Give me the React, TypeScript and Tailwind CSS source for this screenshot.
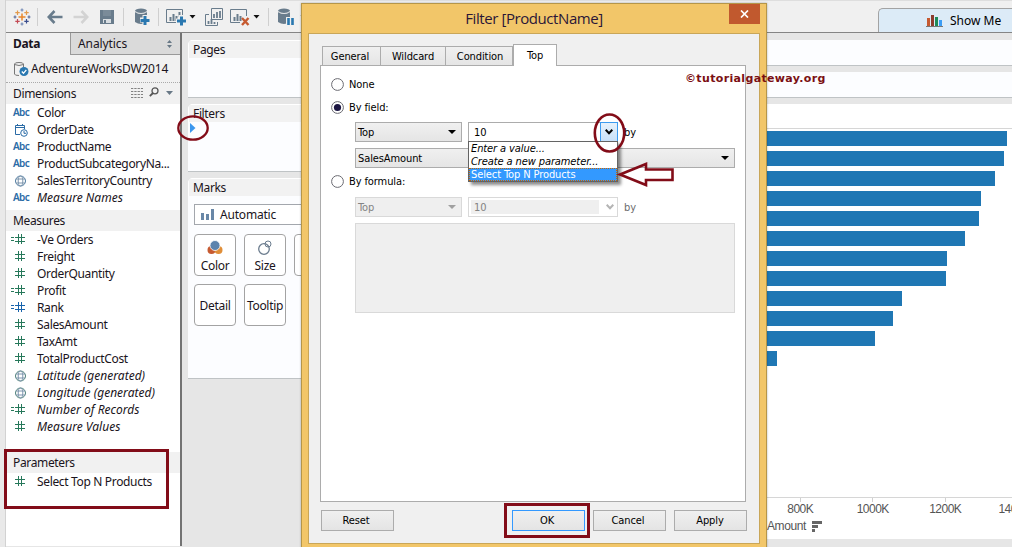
import type { ReactNode } from 'react';

type FieldKind = 'abc' | 'date' | 'globe' | 'globeGreen' | 'num' | 'calc' | 'calcBlue';
type Field = { kind: FieldKind; name: string; italic?: boolean };

const dimensions: Field[] = [
  { kind: 'abc', name: 'Color' },
  { kind: 'date', name: 'OrderDate' },
  { kind: 'abc', name: 'ProductName' },
  { kind: 'abc', name: 'ProductSubcategoryNa...' },
  { kind: 'globe', name: 'SalesTerritoryCountry' },
  { kind: 'abc', name: 'Measure Names', italic: true },
];

const measures: Field[] = [
  { kind: 'calc', name: '-Ve Orders' },
  { kind: 'num', name: 'Freight' },
  { kind: 'num', name: 'OrderQuantity' },
  { kind: 'calc', name: 'Profit' },
  { kind: 'calcBlue', name: 'Rank' },
  { kind: 'num', name: 'SalesAmount' },
  { kind: 'num', name: 'TaxAmt' },
  { kind: 'num', name: 'TotalProductCost' },
  { kind: 'globeGreen', name: 'Latitude (generated)', italic: true },
  { kind: 'globeGreen', name: 'Longitude (generated)', italic: true },
  { kind: 'calc', name: 'Number of Records', italic: true },
  { kind: 'num', name: 'Measure Values', italic: true },
];

const bars = [240, 237, 228, 214, 212, 198, 180, 179, 135, 126, 108, 10];

function FieldIcon({ kind }: { kind: FieldKind }) {
  if (kind === 'abc')
    return <span className="w-[31px] pl-[7px] text-[10px] font-semibold not-italic tracking-[-0.6px] text-[#2a6ba6]">Abc</span>;
  if (kind === 'date')
    return (
      <svg className="ml-[8px] mr-[9px] h-[14px] w-[14px] shrink-0" viewBox="0 0 14 14" fill="none" stroke="#2a6ba6">
        <path d="M6 11.5H1.500V2.500H10.500V6M1.500 4.500H10.500M3.500 1V3M8.500 1V3" />
        <circle cx="10" cy="10" r="3.300" />
        <path d="M10 8V10.300H12" />
      </svg>
    );
  if (kind === 'globe' || kind === 'globeGreen')
    return (
      <svg className="ml-[8px] mr-[9px] h-[14px] w-[14px] shrink-0" viewBox="0 0 14 14" fill="none" stroke={kind === 'globe' ? '#4f7ba0' : '#4c7f79'}>
        <circle cx="6.500" cy="7" r="5" />
        <ellipse cx="6.500" cy="7" rx="2.300" ry="5" stroke="#7d95ad" />
        <path d="M2 5H11M2 9H11" stroke="#7d95ad" />
      </svg>
    );
  const color = kind === 'calcBlue' ? '#1763ac' : '#26785a';
  return (
    <svg className="mb-px ml-[5px] mr-[11px] h-[12px] w-[15px] shrink-0" viewBox="0 0 15 12" stroke={color}>
      <path d="M4 4.500H14M4 8.500H14" />
      <path d="M7.500 1V11M10.500 1V11" />
      {kind !== 'num' && <path d="M0 4.500H3M0 7.500H3" />}
    </svg>
  );
}

function FieldRow({ field }: { field: Field }) {
  return (
    <div className={`flex h-[17px] items-center whitespace-nowrap text-[12px] leading-[17px] text-[#1a1420] ${field.italic ? 'italic tracking-[0.02px]' : 'tracking-[-0.34px]'}`}>
      <FieldIcon kind={field.kind} />
      <span>{field.name}</span>
    </div>
  );
}

function PaneHeader({ title, children }: { title: string; children?: ReactNode }) {
  return (
    <div className="flex h-[21px] shrink-0 items-center bg-[#f1f1f1] pl-[7px] text-[12px] tracking-[-0.35px]">
      {title}
      {children}
    </div>
  );
}

function Sep() {
  return <div className="h-[18px] w-px shrink-0 bg-[#cfcfcf]" />;
}

function Caret({ className }: { className: string }) {
  return (
    <svg className={`h-[4px] w-[7px] shrink-0 ${className}`} viewBox="0 0 7 4">
      <path d="M0.500 0H6.500L3.500 3.500Z" fill="#111" />
    </svg>
  );
}

function Database({ badge }: { badge: 'plus' | 'pause' }) {
  return (
    <>
      <ellipse cx="6" cy="3" rx="6" ry="2.600" fill="#697c8c" />
      <path d="M0 4Q6 8 12 4V14Q6 18 0 14Z" fill="#697c8c" />
      <path d="M0 3.500Q6 7.500 12 3.500" stroke="#f0f0f0" fill="none" strokeWidth=".8" />
      {badge === 'plus' ? (
        <>
          <path d="M10 7V17M5 12H15" stroke="#f0f0f0" strokeWidth="5" />
          <path d="M10 8V17M5.500 12.500H14.500" stroke="#2a78b0" strokeWidth="3" />
        </>
      ) : (
        <>
          <path d="M8 9H17V19H8Z" fill="#f0f0f0" />
          <path d="M10.500 10V17M14.500 10V17" stroke="#2a78b0" strokeWidth="2.600" />
        </>
      )}
    </>
  );
}

function Toolbar() {
  return (
    <div className="flex h-[32px] shrink-0 items-center border-t border-[#dedede] pl-[7px]">
      <svg className="h-[18px] w-[18px] shrink-0" viewBox="0 0 18 18" strokeWidth="1.200" fill="none">
        <path d="M9 5.500V12.500M5.500 9H12.500" stroke="#e8862b" strokeWidth="1.500" />
        <path d="M4.500 2.500V7M2.300 4.700H6.700" stroke="#e39a4b" />
        <path d="M13.500 2.500V7M11.300 4.700H15.700" stroke="#e39a4b" />
        <path d="M4.500 11V15.500M2.300 13.300H6.700" stroke="#c34a55" />
        <path d="M13.500 11V15.500M11.300 13.300H15.700" stroke="#394c8c" />
        <path d="M9 .5V3.500M7.500 2H10.500M9 14.500V17.500M7.500 16H10.500" stroke="#7188b5" />
        <path d="M2 7.500V10.500M.5 9H3.500M16 7.500V10.500M14.500 9H17.500" stroke="#5c6d9b" />
      </svg>
      <div className="ml-[6px]"><Sep /></div>
      <svg className="ml-[9px] h-[14px] w-[16px] shrink-0" viewBox="0 0 16 14" fill="none" stroke="#697c8c" strokeWidth="2.600">
        <path d="M7.500 1L1.800 7L7.500 13M2 7H15.500" />
      </svg>
      <svg className="ml-[10px] h-[14px] w-[16px] shrink-0" viewBox="0 0 16 14" fill="none" stroke="#d3d3d3" strokeWidth="2.600">
        <path d="M8.500 1L14.200 7L8.500 13M14 7H.5" />
      </svg>
      <svg className="ml-[11px] h-[14px] w-[14px] shrink-0" viewBox="0 0 14 14">
        <path d="M0 0H14V14H0Z" fill="#697c8c" />
        <path d="M3 0H11V6H3Z" fill="#7a8b99" />
        <path d="M3 9H11V13H3Z" fill="#d9dee2" />
        <path d="M4 10H6V13H4Z" fill="#697c8c" />
      </svg>
      <div className="ml-[9px]"><Sep /></div>
      <svg className="ml-[11px] h-[18px] w-[15px] shrink-0" viewBox="0 0 15 18"><Database badge="plus" /></svg>
      <div className="ml-[8px]"><Sep /></div>
      <svg className="ml-[7px] h-[18px] w-[20px] shrink-0" viewBox="0 0 20 18" fill="none">
        <path d="M12 14.500H.5V1.500H16.500V8" stroke="#697c8c" />
        <path d="M4.500 13V9M7.500 13V6M10.500 13V8M13.500 9V4" stroke="#697c8c" strokeWidth="2" />
        <path d="M15 7V18M10 13H20" stroke="#f0f0f0" strokeWidth="5" />
        <path d="M15.500 8.500V17.500M11 13H20" stroke="#2a78b0" strokeWidth="3" />
      </svg>
      <Caret className="ml-[3px]" />
      <svg className="ml-[9px] h-[18px] w-[19px] shrink-0" viewBox="0 0 19 18" fill="none" stroke="#697c8c">
        <path d="M6.500 .5H17.500V11.500H6.500ZM4 6.500H.5V17.500H12.500V14" />
        <path d="M9 10V6M12 10V4M15 10V3M3.500 16V13M6.500 16V11M9.500 16V14" strokeWidth="1.800" />
      </svg>
      <svg className="ml-[6px] h-[18px] w-[20px] shrink-0" viewBox="0 0 20 18" fill="none">
        <path d="M10 14.500H.5V1.500H16.500V8" stroke="#697c8c" />
        <path d="M4.500 13V9M7.500 13V6M10.500 13V8" stroke="#697c8c" strokeWidth="2" />
        <path d="M12 10L18.500 17M18.500 10L12 17" stroke="#c65a31" strokeWidth="2.400" />
      </svg>
      <Caret className="ml-[3px]" />
      <div className="ml-[8px]"><Sep /></div>
      <svg className="ml-[9px] h-[18px] w-[17px] shrink-0" viewBox="0 0 17 18"><Database badge="pause" /></svg>
      <Caret className="ml-[5px]" />
      <div className="ml-auto flex h-[24px] w-[134px] shrink-0 items-center self-end rounded-tl-[5px] border-l border-t border-[#a3a3a3] bg-[#dcebf7] pl-[47px] text-[12px]">
        <svg className="mr-[7px] h-[12px] w-[17px]" viewBox="0 0 17 12">
          <path d="M1 3H4V11H1Z" fill="#c65a31" />
          <path d="M5 0H8V11H5Z" fill="#8c3c2e" />
          <path d="M9 2H12V11H9Z" fill="#1e8a5a" />
          <path d="M13 5H16V11H13Z" fill="#3b9df5" />
          <path d="M0 11.500H17" stroke="#777" />
        </svg>
        Show Me
      </div>
    </div>
  );
}

function DataPane() {
  return (
    <div className="flex h-[513px] w-[176px] shrink-0 flex-col border-r-2 border-[#737373] bg-white text-[#1a1420]">
      <div className="flex h-[22px] shrink-0 bg-[#f1f1f1]">
        <div className="w-[64px] pl-[7px] text-[12px] font-bold leading-[22px] tracking-[-0.3px]">Data</div>
        <div className="flex flex-1 items-center border-b border-l border-[#999] bg-[#dadada] pl-[7px] text-[12px] tracking-[-0.1px]">
          Analytics
          <svg className="ml-auto mr-[7px] h-[8px] w-[7px]" viewBox="0 0 7 8" fill="#687886">
            <path d="M1 3H6L3.500 0ZM1 5H6L3.500 8Z" />
          </svg>
        </div>
      </div>
      <div className="flex h-[28px] shrink-0 items-center border-b border-dotted border-[#aaa] bg-[#f1f1f1] pl-[7px] text-[12px] tracking-[-0.5px]">
        <svg className="mr-[2px] h-[16px] w-[16px] shrink-0" viewBox="0 0 16 16" fill="none">
          <path d="M6 14.500Q1.500 14.500 1.500 13V3Q1.500 1.500 6 1.500T10.500 3V6M1.500 3.500Q6 5.500 10.500 3.500" stroke="#777" />
          <circle cx="11" cy="10.500" r="4.500" fill="#2a78b0" />
          <path d="M8.800 10.500L10.500 12.300L13.300 8.800" stroke="#fff" strokeWidth="1.300" />
        </svg>
        <span className="tracking-[-0.2px]">AdventureWorksDW2014</span>
      </div>
      <PaneHeader title="Dimensions">
        <svg className="mb-[2px] ml-auto mr-[6px] h-[10px] w-[12px]" viewBox="0 0 12 10">
          <path d="M0 .5H12M0 3.500H12M0 6.500H12M0 9.500H12" stroke="#828282" strokeDasharray="2.300 1" />
        </svg>
        <svg className="mb-[3px] mr-[7px] h-[10px] w-[10px]" viewBox="0 0 10 10" fill="none" stroke="#555">
          <circle cx="6" cy="3.800" r="3" strokeWidth="1.300" />
          <path d="M4 6L.8 9.200" strokeWidth="1.800" />
        </svg>
        <svg className="mb-px mr-[7px] h-[4px] w-[7px]" viewBox="0 0 7 4"><path d="M0 0H7L3.500 4Z" fill="#687886" /></svg>
      </PaneHeader>
      <div className="h-[106px] shrink-0">
        {dimensions.map((f) => <FieldRow key={f.name} field={f} />)}
      </div>
      <PaneHeader title="Measures" />
      <div className="h-[221px] shrink-0">
        {measures.map((f) => <FieldRow key={f.name} field={f} />)}
      </div>
      <PaneHeader title="Parameters" />
      <FieldRow field={{ kind: 'num', name: 'Select Top N Products' }} />
    </div>
  );
}

function Card({ title, className, children }: { title: string; className: string; children?: ReactNode }) {
  return (
    <div className={`shrink-0 overflow-hidden rounded-tl-[5px] border-b border-[#bfc3c5] bg-[#fcfdff] ${className}`}>
      <div className="h-[18px] border-l border-t border-white bg-[#f2f2f2] pl-[4px] text-[12px] leading-[18px] tracking-[-0.35px]">{title}</div>
      {children}
    </div>
  );
}

function MarkButton({ label, children }: { label: string; children?: ReactNode }) {
  return (
    <div className="flex h-[42px] w-[42px] shrink-0 flex-col items-center justify-center rounded-[4px] border border-[#a3a3a3] bg-white text-[12px] leading-[17px] tracking-[-0.3px]">
      {children}
      {label}
    </div>
  );
}

function Cards() {
  return (
    <div className="flex w-[578px] shrink-0 flex-col gap-[6px] pl-[6px] pt-[7px] text-[#1a1420]">
      <Card title="Pages" className="h-[58px]" />
      <Card title="Filters" className="h-[68px]">
        <svg className="ml-[2px] mt-px h-[10px] w-[6px]" viewBox="0 0 6 10"><path d="M0 0L5.500 5L0 10Z" fill="#3b97ee" /></svg>
      </Card>
      <Card title="Marks" className="h-[201px]">
        <div className="ml-[6px] mt-[8px] flex h-[21px] items-center border border-[#a3a7ad] bg-white pl-[6px] text-[12px] tracking-[-0.2px]">
          <svg className="mr-[5px] h-[12px] w-[14px]" viewBox="0 0 14 12" fill="#6987a7">
            <path d="M0 4H3V11H0ZM5 5H8V11H5ZM10 0H13V11H10Z" />
          </svg>
          Automatic
        </div>
        <div className="ml-[6px] mt-[9px] grid grid-cols-[42px_42px_42px] gap-[8px]">
          <MarkButton label="Color">
            <svg className="mb-px mt-[3px] h-[16px] w-[16px]" viewBox="0 0 16 16">
              <circle cx="4.500" cy="10" r="4" fill="#c65a31" />
              <circle cx="11.500" cy="10" r="4" fill="#e08e38" />
              <circle cx="8" cy="5.500" r="5" fill="#5b83ad" stroke="#fff" strokeWidth=".8" />
            </svg>
          </MarkButton>
          <MarkButton label="Size">
            <svg className="mb-px mt-[3px] h-[16px] w-[16px]" viewBox="0 0 16 16" fill="none" stroke="#6b7c8e">
              <circle cx="7" cy="9" r="5.300" strokeWidth="1.300" />
              <circle cx="11" cy="4" r="3" />
            </svg>
          </MarkButton>
          <MarkButton label="" />
          <MarkButton label="Detail" />
          <MarkButton label="Tooltip" />
        </div>
      </Card>
    </div>
  );
}

function Chart() {
  return (
    <div className="flex flex-1 flex-col gap-[6px] pt-[7px]">
      <div className="h-[26px] shrink-0 border-b border-[#bfc3c5] bg-[#fcfdff]" />
      <div className="h-[26px] shrink-0 border-b border-[#bfc3c5] bg-[#fcfdff]" />
      <div className="flex h-[435px] shrink-0 flex-col overflow-hidden bg-white">
        <div className="h-[25px] shrink-0 border-b border-[#d6d6d6]" />
        <div className="flex h-[369px] shrink-0 flex-col gap-[5px] border-b border-[#d6d6d6] pt-[2px]">
          {bars.map((w) => <div key={w} className="h-[15px] shrink-0 bg-[#1f77b4]" style={{ width: w }} />)}
        </div>
        <div className="-ml-[3px] flex h-[19px] shrink-0 font-['Liberation_Sans',Arial,sans-serif] text-[12px] leading-[15px] tracking-[-0.5px] text-[#555]">
          {['800K', '1000K', '1200K', '1400K'].map((t) => (
            <div key={t} className="flex w-[72.500px] shrink-0 flex-col items-center last:w-[66px]">
              <div className="h-[4px] w-px shrink-0 bg-[#d0d0d0]" />
              <span>{t}</span>
            </div>
          ))}
        </div>
        <div className="flex h-[18px] items-center font-['Liberation_Sans',Arial,sans-serif] text-[12px] tracking-[-0.4px] text-[#555]">
          Amount
          <svg className="ml-[6px] h-[11px] w-[10px]" viewBox="0 0 10 11" fill="#666"><path d="M0 0H10V3H0ZM0 4H6V7H0ZM0 8H3V11H0Z" /></svg>
        </div>
      </div>
    </div>
  );
}

function Radio({ label, checked }: { label: string; checked?: boolean }) {
  return (
    <div className="flex h-[14px] items-center gap-[5px]">
      <svg className="mb-px h-[13px] w-[13px]" viewBox="0 0 13 13">
        <circle cx="6.500" cy="6.500" r="5.900" fill="#fff" stroke="#6b6b72" />
        {checked && <circle cx="6.500" cy="6.500" r="3.600" fill="#1b1541" />}
      </svg>
      <span className="pt-px">{label}</span>
    </div>
  );
}

function Combo({ label, className, disabled }: { label: string; className: string; disabled?: boolean }) {
  return (
    <div className={`flex h-[20px] items-center border pl-[2px] pr-[5px] ${disabled ? 'border-[#d9d9d9] bg-[#efefef] text-[#838383]' : 'border-[#acacac] bg-gradient-to-b from-[#f0f0f0] to-[#e5e5e5]'} ${className}`}>
      <span className="pt-[2px]">{label}</span>
      <svg className="ml-auto h-[4px] w-[8px]" viewBox="0 0 8 4"><path d="M0 0H8L4 4Z" fill={disabled ? '#a0a0a0' : '#000'} /></svg>
    </div>
  );
}

function Chevron({ color }: { color: string }) {
  return (
    <svg className="h-[6px] w-[8px]" viewBox="0 0 8 6" fill="none" stroke={color} strokeWidth="2">
      <path d="M.7 .8L4 4.300L7.300 .8" />
    </svg>
  );
}

function PushButton({ label, className }: { label: string; className: string }) {
  return (
    <div className={`flex h-[21px] w-[73px] shrink-0 items-center justify-center border bg-gradient-to-b from-[#f0f0f0] to-[#e4e4e4] pt-[2px] ${className}`}>{label}</div>
  );
}

function FilterDialog() {
  return (
    <div className="absolute left-[301px] top-[3px] flex h-[550px] w-[466px] flex-col border border-[#b5964a] bg-[#f2c669] px-[6px] text-black shadow-[0_0_2px_rgba(0,0,0,0.3)]">
      <div className="flex h-[29px] shrink-0">
        <div className="flex-1 pl-[31px] text-center font-['Open_Sans','Noto_Sans',sans-serif] text-[15px] leading-[29px] tracking-[-0.42px] text-[#2b1638]">Filter [ProductName]</div>
        <div className="flex h-[20px] w-[31px] items-center justify-center bg-[#c1592e]">
          <svg className="h-[8px] w-[9px]" viewBox="0 0 9 8" stroke="#fff" strokeWidth="1.700"><path d="M1 .5L8 7.500M8 .5L1 7.500" /></svg>
        </div>
      </div>
      <div className="flex h-[511px] shrink-0 flex-col border border-[#c9a658] bg-[#f0f0f0] pl-[11px] pr-[13px] pt-[10px] text-[11px] tracking-[-0.1px] [font-family:'DejaVu_Sans_Condensed','DejaVu_Sans',sans-serif] [font-stretch:condensed]">
        <div className="flex h-[21px] shrink-0 items-end pl-[2px] text-center leading-[20px]">
          <div className="h-[19px] w-[59px] border border-b-0 border-[#acacac] bg-gradient-to-b from-[#f0f0f0] to-[#e5e5e5] pr-[3px]">General</div>
          <div className="h-[19px] w-[65px] border border-b-0 border-l-0 border-[#acacac] bg-gradient-to-b from-[#f0f0f0] to-[#e5e5e5]">Wildcard</div>
          <div className="h-[19px] w-[67px] border border-b-0 border-l-0 border-[#acacac] bg-gradient-to-b from-[#f0f0f0] to-[#e5e5e5] pl-[2px]">Condition</div>
          <div className="relative top-px h-[22px] w-[44px] border border-b-0 border-[#acacac] bg-white leading-[22px]">Top</div>
        </div>
        <div className="flex h-[437px] shrink-0 flex-col border border-[#acacac] bg-white pl-[10px] pt-[12px]">
          <Radio label="None" />
          <div className="h-[9px] shrink-0" />
          <Radio label="By field:" checked />
          <div className="ml-[24px] mt-[7px] flex gap-[6px]">
            <Combo label="Top" className="w-[107px]" />
            <div className="relative flex h-[20px] w-[150px] items-center border border-[#acacac] bg-white pl-[5px]">
              <span className="pt-[2px]">10</span>
              <div className="-mr-px ml-auto flex h-[20px] w-[18px] items-center justify-center border border-[#3c9bf0] bg-gradient-to-b from-[#e6f1fb] to-[#c8e1f9]"><Chevron color="#000" /></div>
              <div className="absolute left-[-1px] top-[18px] z-10 h-[41px] w-[150px] border border-[#646464] bg-white text-[11px] leading-[14px] shadow-[3px_3px_3px_rgba(0,0,0,0.45)]">
                <div className="h-[13px] pl-[2px] italic">Enter a value...</div>
                <div className="h-[13px] pl-[2px] italic">Create a new parameter...</div>
                <div className="h-[13px] border border-dotted border-[#cc6600] bg-[#3399ff] pl-px leading-[12px] text-white">Select Top N Products</div>
              </div>
            </div>
            <div className="leading-[22px]">by</div>
          </div>
          <Combo label="SalesAmount" className="ml-[24px] mt-[4px] w-[380px] shrink-0" />
          <div className="h-[7px] shrink-0" />
          <Radio label="By formula:" />
          <div className="ml-[24px] mt-[8px] flex gap-[6px]">
            <Combo label="Top" className="w-[107px]" disabled />
            <div className="flex h-[20px] w-[150px] items-center border border-[#d9d9d9] bg-white p-[2px] pr-[3px] text-[#838383]">
              <div className="h-[14px] flex-1 bg-[#efefef] pl-[3px] leading-[16px]">10</div>
              <div className="ml-[7px]"><Chevron color="#b4b4b4" /></div>
            </div>
            <div className="leading-[22px] text-[#6d6d6d]">by</div>
          </div>
          <div className="ml-[24px] mt-[4px] h-[90px] w-[380px] shrink-0 border border-[#d9d9d9] bg-[#efefef]" />
        </div>
        <div className="mt-[8px] flex gap-[8px] pl-[1px]">
          <PushButton label="Reset" className="mr-[110px] border-[#acacac] pr-[3px]" />
          <PushButton label="OK" className="border-[#3399ff] pr-[3px]" />
          <PushButton label="Cancel" className="border-[#acacac] pr-[3px]" />
          <PushButton label="Apply" className="border-[#acacac] pr-px" />
        </div>
      </div>
    </div>
  );
}

function Annotations() {
  return (
    <>
      <svg className="pointer-events-none absolute left-0 top-0 z-20 h-[547px] w-[1012px]" viewBox="0 0 1012 547" fill="none" stroke="#820c18" strokeWidth="3">
        <rect x="5.500" y="450.500" width="162" height="57" />
        <ellipse cx="193" cy="128" rx="14.700" ry="11.700" strokeWidth="2.300" />
        <ellipse cx="609.500" cy="133" rx="14.700" ry="18.500" strokeWidth="2.600" />
        <path d="M620 174.500L646 164V169.500H672.500V180H646V185Z" strokeWidth="2.600" />
        <rect x="505.500" y="504.500" width="83" height="32" />
      </svg>
      <div className="absolute left-[685px] top-[70px] z-20 whitespace-nowrap font-['DejaVu_Sans'] text-[11px] font-bold leading-[17px] tracking-[0.35px] text-[#7b1013]">©tutorialgateway.org</div>
    </>
  );
}

export default function App() {
  return (
    <div className="relative flex h-[547px] w-[1012px] overflow-hidden bg-[#e8e8e8] font-['Noto_Sans','Open_Sans',sans-serif]">
      <div className="w-[6px] shrink-0 border-r border-[#d2d2d2] bg-[#e9e9e9]" />
      <div className="flex w-[1006px] flex-col bg-[#e6e6e6]">
        <div className="bg-[#f0f0f0]"><Toolbar /></div>
        <div className="flex h-[515px] shrink-0 border-t border-[#858585]">
          <DataPane />
          <Cards />
          <div className="w-[7px] shrink-0" />
          <Chart />
        </div>
      </div>
      <FilterDialog />
      <Annotations />
    </div>
  );
}
